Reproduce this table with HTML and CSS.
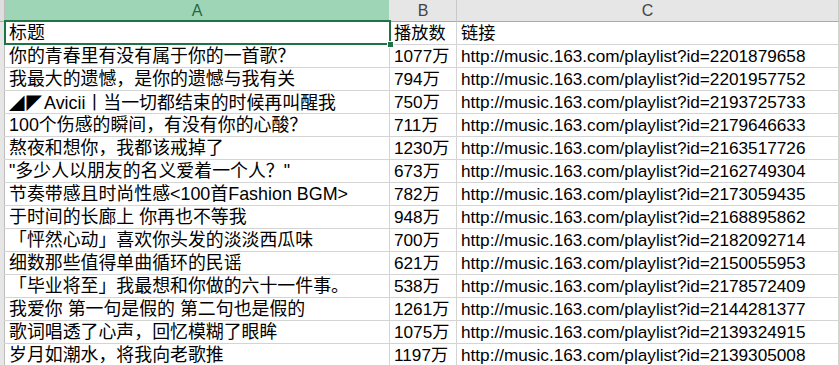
FILE: index.html
```html
<!DOCTYPE html>
<html lang="zh-CN">
<head>
<meta charset="utf-8">
<title>Sheet</title>
<link rel="stylesheet" href="styles.css">
</head>
<body>
<div class="sheet">
  <div class="rh corner"></div>
  <div class="ch ch-sel">A</div>
  <div class="ch">B</div>
  <div class="ch">C</div>

  <div class="rh"></div><div class="cell">标题</div><div class="cell num">播放数</div><div class="cell url">链接</div>
  <div class="rh"></div><div class="cell">你的青春里有没有属于你的一首歌？</div><div class="cell num">1077万</div><div class="cell url">http://music.163.com/playlist?id=2201879658</div>
  <div class="rh"></div><div class="cell">我最大的遗憾，是你的遗憾与我有关</div><div class="cell num">794万</div><div class="cell url">http://music.163.com/playlist?id=2201957752</div>
  <div class="rh"></div><div class="cell"><span class="tri">◢◤</span>Avicii丨当一切都结束的时候再叫醒我</div><div class="cell num">750万</div><div class="cell url">http://music.163.com/playlist?id=2193725733</div>
  <div class="rh"></div><div class="cell">100个伤感的瞬间，有没有你的心酸？</div><div class="cell num">711万</div><div class="cell url">http://music.163.com/playlist?id=2179646633</div>
  <div class="rh"></div><div class="cell">熬夜和想你，我都该戒掉了</div><div class="cell num">1230万</div><div class="cell url">http://music.163.com/playlist?id=2163517726</div>
  <div class="rh"></div><div class="cell">"多少人以朋友的名义爱着一个人？"</div><div class="cell num">673万</div><div class="cell url">http://music.163.com/playlist?id=2162749304</div>
  <div class="rh"></div><div class="cell">节奏带感且时尚性感&lt;100首Fashion BGM&gt;</div><div class="cell num">782万</div><div class="cell url">http://music.163.com/playlist?id=2173059435</div>
  <div class="rh"></div><div class="cell">于时间的长廊上 你再也不等我</div><div class="cell num">948万</div><div class="cell url">http://music.163.com/playlist?id=2168895862</div>
  <div class="rh"></div><div class="cell">「怦然心动」喜欢你头发的淡淡西瓜味</div><div class="cell num">700万</div><div class="cell url">http://music.163.com/playlist?id=2182092714</div>
  <div class="rh"></div><div class="cell">细数那些值得单曲循环的民谣</div><div class="cell num">621万</div><div class="cell url">http://music.163.com/playlist?id=2150055953</div>
  <div class="rh"></div><div class="cell">「毕业将至」我最想和你做的六十一件事。</div><div class="cell num">538万</div><div class="cell url">http://music.163.com/playlist?id=2178572409</div>
  <div class="rh"></div><div class="cell">我爱你 第一句是假的 第二句也是假的</div><div class="cell num">1261万</div><div class="cell url">http://music.163.com/playlist?id=2144281377</div>
  <div class="rh"></div><div class="cell">歌词唱透了心声，回忆模糊了眼眸</div><div class="cell num">1075万</div><div class="cell url">http://music.163.com/playlist?id=2139324915</div>
  <div class="rh"></div><div class="cell">岁月如潮水，将我向老歌推</div><div class="cell num">1197万</div><div class="cell url">http://music.163.com/playlist?id=2139305008</div>

  <div class="selection"><div class="handle"></div></div>
</div>
</body>
</html>
```

FILE: styles.css
```css
html, body {
  margin: 0;
  padding: 0;
  background: #ffffff;
  overflow: hidden;
}

.sheet {
  position: relative;
  display: grid;
  grid-template-columns: 5px 385px 67px 1fr;
  grid-auto-rows: 23px;
  grid-template-rows: 22px;
  width: 839px;
  font-family: "Liberation Sans", "Noto Sans CJK SC", sans-serif;
  font-size: 17.9px;
  color: #000000;
  text-spacing-trim: space-all;
}

.rh {
  box-sizing: border-box;
  background: #e6e6e6;
  border-right: 1px solid #bcbcbc;
  border-bottom: 1px solid #e6e6e6;
}

.corner {
  background: #dedede;
  border-bottom: 1px solid #ababab;
}

.ch {
  box-sizing: border-box;
  background: #e6e6e6;
  border-right: 1px solid #c9c9c9;
  border-bottom: 1px solid #ababab;
  text-align: center;
  font-family: "Liberation Sans", sans-serif;
  font-size: 16px;
  line-height: 21px;
  color: #444444;
}

.ch-sel {
  background: #9fd5b7;
  color: #1f6b42;
  border-right: 1px solid #e6e6e6;
}

.cell {
  box-sizing: border-box;
  border-right: 1px solid #d4d4d4;
  border-bottom: 1px solid #d4d4d4;
  padding: 0 0 0 4px;
  line-height: 22px;
  white-space: nowrap;
  overflow: hidden;
}

.num,
.url {
  font-size: 17.2px;
}

.num:first-of-type {
  font-size: 17.9px;
}

.tri {
  font-family: "Noto Sans CJK SC", sans-serif;
  font-size: 15.5px;
  letter-spacing: 2px;
}

.selection {
  position: absolute;
  left: 4px;
  top: 20px;
  width: 387px;
  height: 25px;
  box-sizing: border-box;
  border: 2px solid #217346;
  pointer-events: none;
}

.handle {
  position: absolute;
  right: -5px;
  bottom: -5px;
  width: 5px;
  height: 5px;
  background: #217346;
  border: 1px solid #ffffff;
}
```
